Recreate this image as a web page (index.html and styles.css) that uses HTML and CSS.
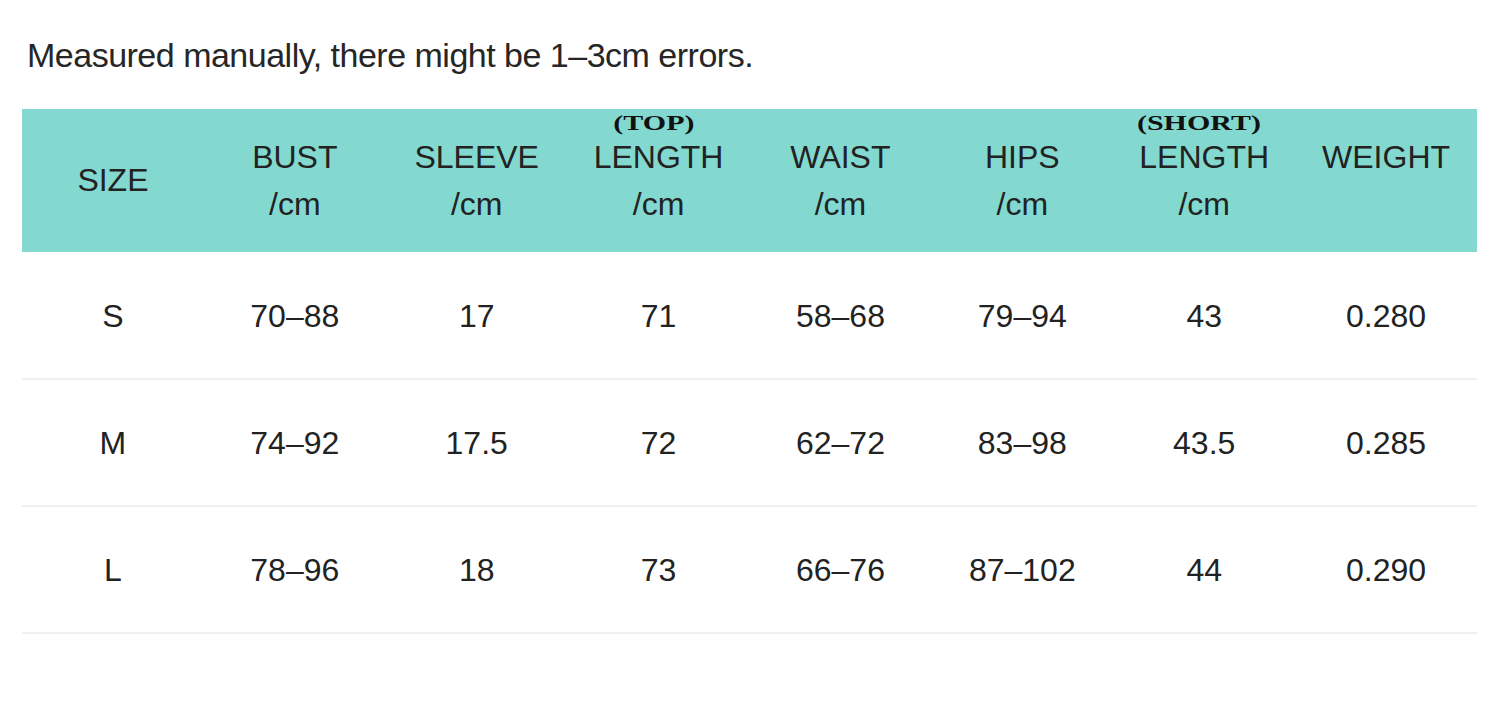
FILE: index.html
```html
<!DOCTYPE html>
<html>
<head>
<meta charset="utf-8">
<link rel="stylesheet" href="styles.css">
</head>
<body>
<div class="page">
  <p class="note">Measured manually, there might be 1–3cm errors.</p>
  <div class="table">
    <div class="row head">
      <div class="cell">SIZE</div>
      <div class="cell">BUST<br>/cm</div>
      <div class="cell">SLEEVE<br>/cm</div>
      <div class="cell"><span class="tag">(TOP)</span>LENGTH<br>/cm</div>
      <div class="cell">WAIST<br>/cm</div>
      <div class="cell">HIPS<br>/cm</div>
      <div class="cell"><span class="tag">(SHORT)</span>LENGTH<br>/cm</div>
      <div class="cell top">WEIGHT</div>
    </div>
    <div class="row">
      <div class="cell">S</div><div class="cell">70–88</div><div class="cell">17</div><div class="cell">71</div><div class="cell">58–68</div><div class="cell">79–94</div><div class="cell">43</div><div class="cell">0.280</div>
    </div>
    <div class="row">
      <div class="cell">M</div><div class="cell">74–92</div><div class="cell">17.5</div><div class="cell">72</div><div class="cell">62–72</div><div class="cell">83–98</div><div class="cell">43.5</div><div class="cell">0.285</div>
    </div>
    <div class="row">
      <div class="cell">L</div><div class="cell">78–96</div><div class="cell">18</div><div class="cell">73</div><div class="cell">66–76</div><div class="cell">87–102</div><div class="cell">44</div><div class="cell">0.290</div>
    </div>
  </div>
</div>
</body>
</html>
```
FILE: styles.css
```css
html, body {
  margin: 0;
  padding: 0;
  background: #fff;
}
.page {
  width: 1500px;
  height: 709px;
  font-family: "Liberation Sans", Arial, sans-serif;
  color: #222;
}
.note {
  margin: 0;
  padding: 35px 0 0 27px;
  height: 109px;
  box-sizing: border-box;
  font-size: 34px;
  line-height: 40px;
  letter-spacing: -0.5px;
  color: #262626;
}
.table {
  margin-left: 22px;
  width: 1455px;
}
.row {
  display: grid;
  grid-template-columns: repeat(8, 1fr);
  height: 127px;
  border-bottom: 2px solid #f0f0f0;
  box-sizing: border-box;
  align-items: center;
  text-align: center;
  font-size: 32px;
  line-height: 47px;
}
.row.head {
  height: 143px;
  background: #83d9d0;
  border-bottom: none;
}
.row.head + .row {
  height: 128px;
}
.row:not(.head) .cell {
  padding-top: 2px;
}
.cell {
  position: relative;
}
.head .cell.top {
  align-self: start;
  padding-top: 25px;
}
.tag {
  position: absolute;
  left: -10px;
  right: 0;
  top: -21px;
  display: block;
  font-family: "Liberation Serif", "Times New Roman", serif;
  font-weight: bold;
  font-size: 20px;
  line-height: 20px;
  color: #111;
  transform: scaleX(1.5);
}
```
